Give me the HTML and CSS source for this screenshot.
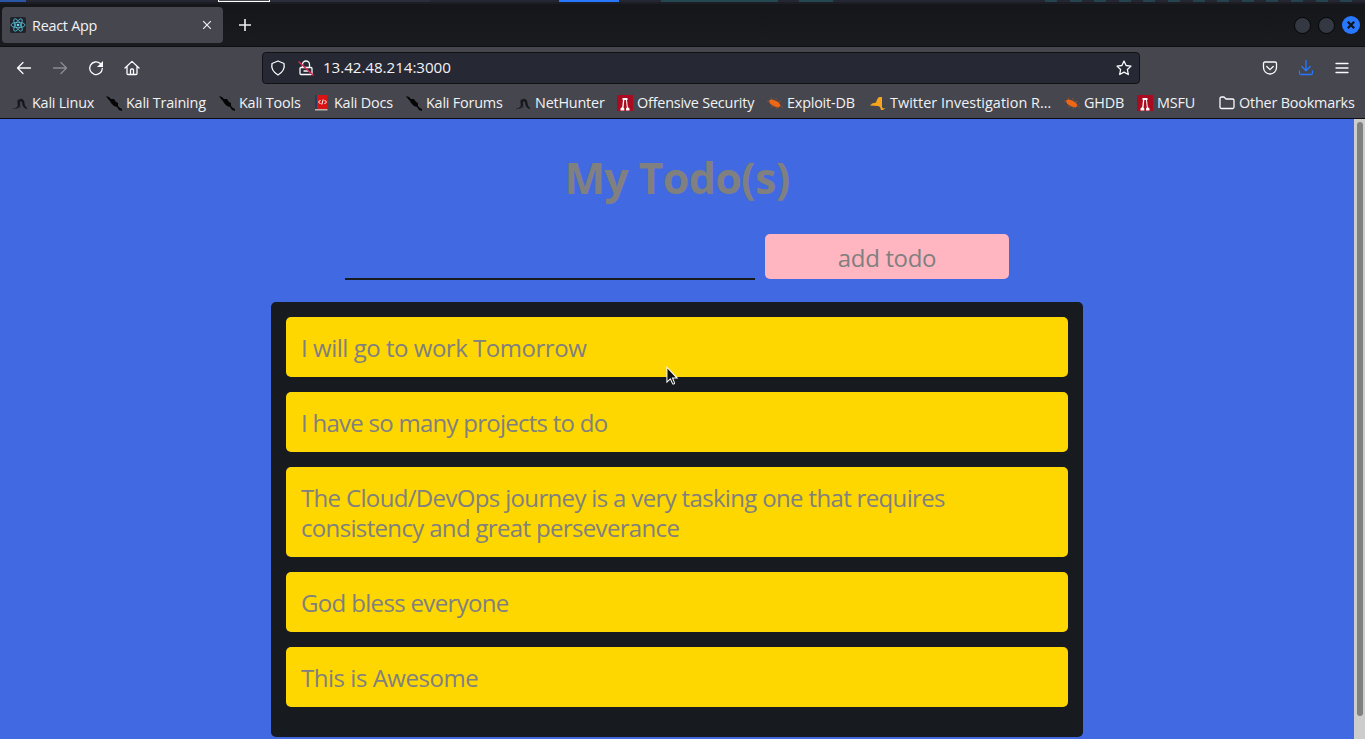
FILE: index.html
```
<!DOCTYPE html>
<html lang="en">
<head>
<meta charset="utf-8">
<title>React App</title>
<link rel="stylesheet" href="styles.css">
</head>
<body>
<svg class="defs" width="0" height="0">
  <symbol id="kali" viewBox="0 0 16 16"><path d="M4 13.200q3-1.700 2-4.200-1-3 2-4.800 4-.5 4 3.300 0 3 3 6.200-4-.7-4.500-5.500Q10.300 5.500 8.500 6 7 7 7.800 9 8.500 12 4 13.200z" fill="#151619" stroke="#151619" stroke-width=".6"/><path d="M1 13.700q5-.2 8-2M5 6l2-2" stroke="#292a2f" fill="none" stroke-width=".9"/></symbol>
  <symbol id="dragon" viewBox="0 0 16 16"><path d="M0 1l3 1 2 2 3 0 2 3 2 1 0 3 2 2 2 1 0 2-3-1-2-3-3-1-3-3-1-2-2-2z" fill="#050506"/></symbol>
  <symbol id="offsec" viewBox="0 0 16 16"><path fill="#a90c20" d="M0 0h16v16H0z"/><path fill="#fff" d="M5.500 3h5v2h-.5l.8 7 1.700 1.500V15.500H9v-2l.8-.8L9 5H7.300l-.8 7.700.8.800v2H3.500v-2L5.200 12 6 5h-.5z"/></symbol>
  <symbol id="bug" viewBox="0 0 16 16"><path fill="#ee6716" d="M2 5.500q2-2 6 0 4.500 1.500 5.500 5l-2 2q-5-.5-8.500-4z"/><path d="M3 7L0 6m5-1L4 2.500m5 3V3m2 4l3-.5m-7 4l-3 1.500m6-.5l-1 2.500m4-3l3 1.500m-1-3.500l2-.5" stroke="#a55428" fill="none" stroke-width=".7"/></symbol>
</svg>
<div class="panel"><i class="p-blue"></i><i class="p-win"></i><i class="p-tasks"></i><i class="p-active"></i><i class="p-teal"></i><i class="p-teal2"></i><i class="p-stripes"></i></div>
<header class="titlebar">
  <div class="tab">
    <svg class="react" viewBox="0 0 16 16"><rect width="16" height="16" rx="1.500" fill="#20232a"/><g fill="none" stroke="#58c4dc" stroke-width=".8"><ellipse cx="8" cy="8" rx="7" ry="2.700"/><ellipse cx="8" cy="8" rx="7" ry="2.700" transform="rotate(60 8 8)"/><ellipse cx="8" cy="8" rx="7" ry="2.700" transform="rotate(120 8 8)"/></g><circle cx="8" cy="8" r="1.300" fill="#61dafb"/></svg>
    <span class="tab-title">React App</span>
    <svg class="close" viewBox="0 0 10 10"><path d="M1.200 1.200l7.600 7.600m0-7.600L1.200 8.800"/></svg>
  </div>
  <svg class="plus" viewBox="0 0 14 14"><path d="M7 1v12M1 7h12"/></svg>
  <div class="controls"><i></i><i></i><svg viewBox="0 0 18 18"><circle cx="9" cy="9" r="9" fill="#2777ff"/><path d="M5.800 5.800l6.400 6.400m0-6.400l-6.400 6.400" stroke="#111318" stroke-width="2.200"/></svg></div>
</header>
<div class="toolbar">
  <nav class="nav">
    <svg class="ico" viewBox="0 0 16 16"><path d="M14.500 8H1.500m5.500-5.500L1.500 8l5.500 5.500"/></svg>
    <svg class="ico dim" viewBox="0 0 16 16"><path d="M1.500 8h13M9 2.500L14.500 8 9 13.500"/></svg>
    <svg class="ico" viewBox="0 0 16 16"><path d="M14.300 8.500A6.300 6.300 0 1 1 12.300 3.600"/><path d="M15 1v6H9z" fill="#fbfbfe" stroke="none"/></svg>
    <svg class="ico" viewBox="0 0 16 16"><path d="M1 8l7-6.600L15 8M3 6.500v7q0 1 1 1h8q1 0 1-1v-7M6.500 14.500V10q0-1 1-1h1q1 0 1 1v4.500"/></svg>
  </nav>
  <div class="urlbar">
    <svg class="ico shield" viewBox="0 0 16 16"><path d="M8 1l6 2.500q1.500 7-6 11.500Q.5 10.500 2 3.500z"/></svg>
    <svg class="ico lock" viewBox="0 0 16 16"><path d="M4.500 7V4.500a3.500 3.500 0 0 1 7 0V7M3 7.500h10q1 0 1 1v5q0 1-1 1H3q-1 0-1-1v-5q0-1 1-1zM6 11h4"/><path d="M1 2l14 13" stroke="#e22850" stroke-width="1.500"/></svg>
    <span class="url">13.42.48.214:3000</span>
    <svg class="ico star" viewBox="0 0 16 16"><path d="M8 1l2.100 4.500 4.900.6-3.600 3.400.9 5L8 12.100l-4.300 2.400.9-5L1 6.100l4.900-.6z"/></svg>
  </div>
  <div class="tools">
    <svg class="ico" viewBox="0 0 16 16"><path d="M3 2h10q1.500 0 1.500 1.500V7.500a6.500 6.500 0 0 1-13 0v-4Q1.500 2 3 2zM4.800 6.500L8 9.600l3.200-3.100"/></svg>
    <svg class="ico dl" viewBox="0 0 16 16"><path d="M8 .5v10M3.800 6.500L8 10.700l4.200-4.200M1.500 11v2q0 1.500 1.500 1.500h10q1.500 0 1.500-1.500v-2"/></svg>
    <svg class="ico" viewBox="0 0 16 16"><path d="M2 3.500h12M2 8h12M2 12.500h12"/></svg>
  </div>
</div>
<div class="bookmarks">
  <div class="bm w1"><svg><use href="#kali"/></svg><span>Kali Linux</span></div>
  <div class="bm w2"><svg><use href="#dragon"/></svg><span>Kali Training</span></div>
  <div class="bm w3"><svg><use href="#dragon"/></svg><span>Kali Tools</span></div>
  <div class="bm w4"><svg viewBox="0 0 16 16"><path fill="#263d60" d="M1 0h3v15H1z"/><path fill="#d91414" d="M3 0h10.500v14H3z"/><path fill="#bbb5ae" d="M1 14h12.500v1.500H1z"/><path d="M6.500 5l-2 2 2 2m4-4l2 2-2 2M9.200 4.500L7.800 9.500" stroke="#fff" fill="none"/></svg><span>Kali Docs</span></div>
  <div class="bm w5"><svg><use href="#dragon"/></svg><span>Kali Forums</span></div>
  <div class="bm w6"><svg><use href="#kali"/></svg><span>NetHunter</span></div>
  <div class="bm w7"><svg><use href="#offsec"/></svg><span>Offensive Security</span></div>
  <div class="bm w8"><svg><use href="#bug"/></svg><span>Exploit-DB</span></div>
  <div class="bm w9"><svg viewBox="0 0 16 16"><path fill="#f8a51b" d="M0 10.500l2-2 4-1 1-3 2-2.500h3v10l1 1.500 2.500-.5-2.500 2H11l-1-3-2-1z"/></svg><span>Twitter Investigation R…</span></div>
  <div class="bm w10"><svg><use href="#bug"/></svg><span>GHDB</span></div>
  <div class="bm w11"><svg><use href="#offsec"/></svg><span>MSFU</span></div>
  <div class="bm w12"><svg class="ico" viewBox="0 0 16 16"><path d="M1 3.500Q1 2 2.500 2H5l2 2h6.500Q15 4 15 5.500V12q0 1.500-1.500 1.500h-11Q1 13.500 1 12z"/></svg><span>Other Bookmarks</span></div>
</div>
<main class="viewport">
  <div class="app">
    <h1>My Todo(s)</h1>
    <form class="entry"><input type="text" aria-label="Todo"><button type="button"><span>add todo</span></button></form>
    <ul class="list">
      <li><span class="loose">I will go to work Tomorrow</span></li>
      <li><span class="tight">I have so many projects to do</span></li>
      <li><span>The Cloud/DevOps journey is a very tasking one that requires</span><span>consistency and great perseverance</span></li>
      <li><span>God bless everyone</span></li>
      <li><span class="loose">This is Awesome</span></li>
    </ul>
  </div>
  <div class="scroll"><i></i></div>
</main>
<svg class="cursor" viewBox="0 0 14 21"><path d="M1 1v16l3.700-3.500 2.300 5q.5 1 1.500.6t.6-1.500l-2.100-4.900h5z" fill="#111" stroke="#fff" stroke-width="1.100"/></svg>
</body>
</html>
```
FILE: styles.css
```
* { box-sizing: border-box; }
body { margin: 0; width: 1365px; height: 739px; overflow: hidden; display: flex; flex-direction: column; font-family: "Open Sans", "Noto Sans", sans-serif; font-size: 14.400px; color: #f2f2f5; background: #16171b; }
svg { display: block; flex: none; overflow: visible; }
.defs { position: absolute; }
.panel { height: 4px; flex: none; display: flex; background: linear-gradient(#242631 2px, #1d1e25 2px); }
.panel i { height: 2px; }
.p-blue { width: 26px; background: #2855a4; }
.p-win { width: 52px; margin-left: 192px; background: #4a4b52; border: solid #fff; border-width: 0 1px 1px; }
.p-tasks { width: 160px; background: #2b2d3b; }
.p-active { width: 60px; margin-left: 129px; background: #2777ff; }
.p-teal { width: 117px; margin-left: 42px; background: #24484f; }
.p-teal2 { width: 34px; margin-left: 21px; background: #24484f; }
.p-stripes { flex: 1; margin-left: 212px; background: repeating-linear-gradient(90deg, #25424f 0 12px, #242631 12px 24.600px); }
.titlebar { height: 43px; flex: none; display: flex; align-items: center; background: linear-gradient(#15161a, #1a1b1f); border-bottom: 1px solid #0e0f12; padding: 0 5px 0 2px; }
.tab { width: 221px; height: 36px; border-radius: 4px; background: #45464e; display: flex; align-items: center; padding: 0 11px 0 8px; }
.react { width: 16px; height: 16px; }
.tab-title { margin-left: 6px; flex: 1; white-space: nowrap; letter-spacing: -.25px; }
.close { width: 10px; height: 10px; }
.close path, .plus path { stroke: #eeeef2; stroke-width: 1.200; fill: none; }
.plus { width: 14px; height: 14px; margin-left: 15px; }
.plus path { stroke-width: 1.600; }
.controls { margin-left: auto; display: flex; gap: 7px; align-items: center; }
.controls i { width: 17px; height: 17px; border-radius: 50%; background: #343843; border: 1px solid #050608; }
.controls svg { width: 18px; height: 18px; }
.toolbar { height: 41px; flex: none; display: flex; align-items: center; background: #45464e; padding-left: 16px; }
.ico { width: 16px; height: 16px; fill: none; stroke: #fbfbfe; stroke-width: 1.300; stroke-linejoin: round; stroke-linecap: round; }
.dim { stroke: #8b8c92; }
.nav { display: flex; gap: 20px; width: 246px; }
.urlbar { width: 878px; height: 32px; border: 1px solid #111217; border-radius: 4px; background: #262833; display: flex; align-items: center; padding: 0 7px; }
.lock { margin-left: 12px; }
.url { margin-left: 9px; flex: 1; font-size: 15.200px; letter-spacing: -.06px; padding-bottom: 2px; }
.tools { display: flex; gap: 20px; margin-left: 122px; }
.dl { stroke: #2777ff; }
.bookmarks { height: 31px; flex: none; display: flex; align-items: center; background: #45464e; border-bottom: 1px solid #0c0d10; padding: 0 0 1px 12px; }
.bm { display: flex; align-items: center; gap: 4px; white-space: nowrap; flex: none; letter-spacing: -.2px; }
.bm svg { width: 16px; height: 16px; }
.w1 { width: 94px; } .w2 { width: 113px; } .w3 { width: 95px; } .w4 { width: 92px; }
.w5 { width: 109px; } .w6 { width: 102px; } .w7 { width: 150px; } .w8 { width: 103px; }
.w9 { width: 194px; letter-spacing: .04px; } .w10 { width: 73px; } .w11 { width: 82px; }
.viewport { height: 620px; flex: none; display: flex; background: #4169e1; }
.app { width: 1354px; color: #808080; display: flex; flex-direction: column; align-items: center; }
h1 { margin: 30px 0 27px; font-size: 43px; line-height: 58px; letter-spacing: -.7px; white-space: nowrap; }
.entry { display: flex; gap: 10px; height: 46px; }
.entry input { width: 410px; height: 46px; border: 0; border-bottom: 2px solid #171a1e; background: none; outline: 0; }
.entry button { width: 244px; height: 45px; border: 0; border-radius: 5px; background: #ffb6c1; color: #808080; font: 24px "Open Sans", "Noto Sans", sans-serif; letter-spacing: -.35px; padding: 1px 0 0; }
.list { width: 812px; height: 435px; margin: 22px 0 0; padding: 15px; list-style: none; border-radius: 5px; background: #171a1e; display: flex; flex-direction: column; gap: 15px; font-size: 24px; line-height: 30px; letter-spacing: -.66px; }
.list li { padding: 16px 15px 14px; border-radius: 5px; background: #ffd700; white-space: nowrap; }
.list span { display: block; height: 30px; }
.list .loose { letter-spacing: -.47px; }
.list .tight { letter-spacing: -.74px; }
.scroll { width: 11px; background: #cdcdcd; padding: 3px 2px 0 3px; }
.scroll i { display: block; width: 6px; height: 594px; border-radius: 3px; background: #7f8181; }
.cursor { position: absolute; left: 666px; top: 366px; width: 13px; height: 20px; }
```
